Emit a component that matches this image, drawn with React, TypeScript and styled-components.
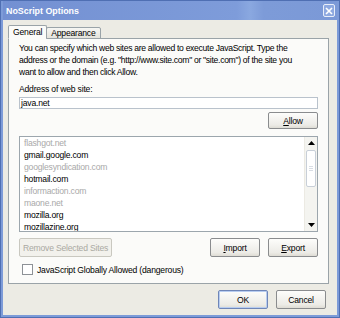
import React from "react";
import styled, { createGlobalStyle } from "styled-components";

const Global = createGlobalStyle`
  html, body { margin: 0; padding: 0; background: #ffffff; }
  * { box-sizing: border-box; }
`;

const Frame = styled.div`
  width: 340px;
  height: 318px;
  background: #7d9bd8;
  border: 1px solid #4f6fb3;
  padding: 0 2px 2px 2px;
  display: flex;
  flex-direction: column;
  font-family: "Liberation Sans", Arial, sans-serif;
  font-size: 8.6px;
  letter-spacing: -0.2px;
  color: #000;
  white-space: nowrap;
`;

const TitleBar = styled.div`
  height: 19px;
  flex: none;
  display: flex;
  align-items: center;
  justify-content: space-between;
  padding: 0 2px 0 3px;
  background: linear-gradient(to right, #7390d2 0%, #7e9cda 70%, #8aa8e0 74%, #7d9bd8 78%, #7b99d7 100%);
`;

const Title = styled.span`
  color: #fff;
  font-weight: bold;
  font-size: 8.9px;
  letter-spacing: 0;
`;

const CloseBox = styled.div`
  width: 12px;
  height: 13px;
  border: 1px solid #e8eef9;
  border-radius: 2px;
  background: #8ea9e0;
  display: flex;
  align-items: center;
  justify-content: center;
`;

const Client = styled.div`
  flex: 1;
  background: #ecebe4;
  display: flex;
  flex-direction: column;
  padding: 5px 8px 0 5px;
`;

const TabStrip = styled.div`
  display: flex;
  align-items: flex-end;
  height: 14px;
  position: relative;
  z-index: 1;
  margin-bottom: -1px;
`;

const Tab = styled.div<{ $active?: boolean }>`
  height: ${(p) => (p.$active ? 14 : 12)}px;
  padding: 0 4px;
  display: flex;
  align-items: center;
  border: 1px solid #9aa3a8;
  border-bottom: ${(p) => (p.$active ? "1px solid #fbfbf9" : "1px solid #9aa3a8")};
  border-radius: 2px 2px 0 0;
  background: ${(p) => (p.$active ? "#fbfbf9" : "linear-gradient(#f6f6f3, #e4e3dc)")};
  margin-left: ${(p) => (p.$active ? 0 : -1)}px;
`;

const Panel = styled.div`
  height: 246px;
  border: 1px solid #9aa3a8;
  background: #fbfbf9;
  padding: 3px 10px 0 10px;
  display: flex;
  flex-direction: column;
`;

const Para = styled.p`
  margin: 0;
  line-height: 12px;
  white-space: normal;
  letter-spacing: -0.3px;
  padding-right: 12px;
`;

const Label = styled.div`
  margin-top: 5px;
  line-height: 12px;
`;

const TextInput = styled.div`
  margin-top: 2px;
  height: 12px;
  border: 1px solid #b9c2cc;
  background: #fff;
  padding: 0 1px;
  line-height: 10px;
`;

const Row = styled.div<{ $justify?: string }>`
  display: flex;
  justify-content: ${(p) => p.$justify || "flex-end"};
  gap: 8px;
  align-items: center;
`;

const Btn = styled.div<{ $disabled?: boolean; $focus?: boolean; $w?: number; $h?: number }>`
  width: ${(p) => p.$w || 50}px;
  height: ${(p) => p.$h || 19}px;
  border: 1px solid ${(p) => (p.$disabled ? "#c9c8c0" : p.$focus ? "#6f86b8" : "#8a8c8e")};
  border-radius: 2px;
  background: ${(p) => (p.$disabled ? "#f2f1ec" : "linear-gradient(#fdfdfb, #ecebe6 80%, #dedcd4)")};
  box-shadow: ${(p) => (p.$focus ? "inset 0 0 0 1px #b8cdf0" : "none")};
  color: ${(p) => (p.$disabled ? "#aaa9a2" : "#000")};
  display: flex;
  align-items: center;
  justify-content: center;
  u { text-decoration: underline; }
`;

const ListBox = styled.div`
  margin-top: 7px;
  height: 96px;
  border: 1px solid #9ca6ad;
  background: #fff;
  display: flex;
`;

const Items = styled.div`
  flex: 1;
  padding: 0 0 0 4px;
  overflow: hidden;
`;

const Item = styled.div<{ $dim?: boolean }>`
  height: 12px;
  line-height: 12px;
  color: ${(p) => (p.$dim ? "#a9a9a9" : "#000")};
`;

const ScrollBar = styled.div`
  width: 13px;
  display: flex;
  flex-direction: column;
  background: #f4f4f0;
  border-left: 1px solid #eceae3;
`;

const Arrow = styled.div`
  height: 12px;
  display: flex;
  align-items: center;
  justify-content: center;
`;

const Thumb = styled.div`
  margin: 1px 1px 0 1px;
  height: 37px;
  border: 1px solid #c8cfd8;
  border-radius: 2px;
  background: #fff;
  display: flex;
  align-items: center;
  justify-content: center;
`;

const Grip = styled.div`
  width: 4px;
  height: 6px;
  background: repeating-linear-gradient(#d8dde4 0 1px, #fff 1px 2px);
`;

const Track = styled.div`
  flex: 1;
`;

const CheckRow = styled.div`
  margin-top: 7px;
  display: flex;
  align-items: center;
  gap: 4px;
  padding-left: 3px;
`;

const CheckBox = styled.div`
  width: 11px;
  height: 11px;
  border: 1px solid #8d9196;
  background: #fff;
`;

const Footer = styled.div`
  display: flex;
  justify-content: flex-end;
  gap: 8px;
  padding: 6px 3px 0 0;
`;

const sites: [string, boolean][] = [
  ["flashgot.net", true],
  ["gmail.google.com", false],
  ["googlesyndication.com", true],
  ["hotmail.com", false],
  ["informaction.com", true],
  ["maone.net", true],
  ["mozilla.org", false],
  ["mozillazine.org", false],
];

export default function App() {
  return (
    <>
      <Global />
      <Frame>
        <TitleBar>
          <Title>NoScript Options</Title>
          <CloseBox>
            <svg width="8" height="8" viewBox="0 0 8 8">
              <path d="M1 1 L7 7 M7 1 L1 7" stroke="#fff" strokeWidth="1.6" />
            </svg>
          </CloseBox>
        </TitleBar>
        <Client>
          <TabStrip>
            <Tab $active>General</Tab>
            <Tab>Appearance</Tab>
          </TabStrip>
          <Panel>
            <Para>
              You can specify which web sites are allowed to execute JavaScript. Type the address or the
              domain (e.g. "http://www.site.com" or "site.com") of the site you want to allow and then click
              Allow.
            </Para>
            <Label>Address of web site:</Label>
            <TextInput>java.net</TextInput>
            <Row style={{ marginTop: 3 }}>
              <Btn $w={50} $h={17}>
                <span>
                  <u>A</u>llow
                </span>
              </Btn>
            </Row>
            <ListBox>
              <Items>
                {sites.map(([s, dim]) => (
                  <Item key={s} $dim={dim}>
                    {s}
                  </Item>
                ))}
              </Items>
              <ScrollBar>
                <Arrow>
                  <svg width="7" height="4" viewBox="0 0 7 4">
                    <path d="M0 4 L3.5 0 L7 4 Z" fill="#000" />
                  </svg>
                </Arrow>
                <Thumb>
                  <Grip />
                </Thumb>
                <Track />
                <Arrow>
                  <svg width="7" height="4" viewBox="0 0 7 4">
                    <path d="M0 0 L7 0 L3.5 4 Z" fill="#000" />
                  </svg>
                </Arrow>
              </ScrollBar>
            </ListBox>
            <Row $justify="space-between" style={{ marginTop: 6 }}>
              <Btn $disabled $w={93}>Remove Selected Sites</Btn>
              <Row>
                <Btn>
                  <span>
                    <u>I</u>mport
                  </span>
                </Btn>
                <Btn>
                  <span>
                    <u>E</u>xport
                  </span>
                </Btn>
              </Row>
            </Row>
            <CheckRow>
              <CheckBox />
              <span>JavaScript Globally Allowed (dangerous)</span>
            </CheckRow>
          </Panel>
          <Footer>
            <Btn $focus>OK</Btn>
            <Btn>Cancel</Btn>
          </Footer>
        </Client>
      </Frame>
    </>
  );
}
